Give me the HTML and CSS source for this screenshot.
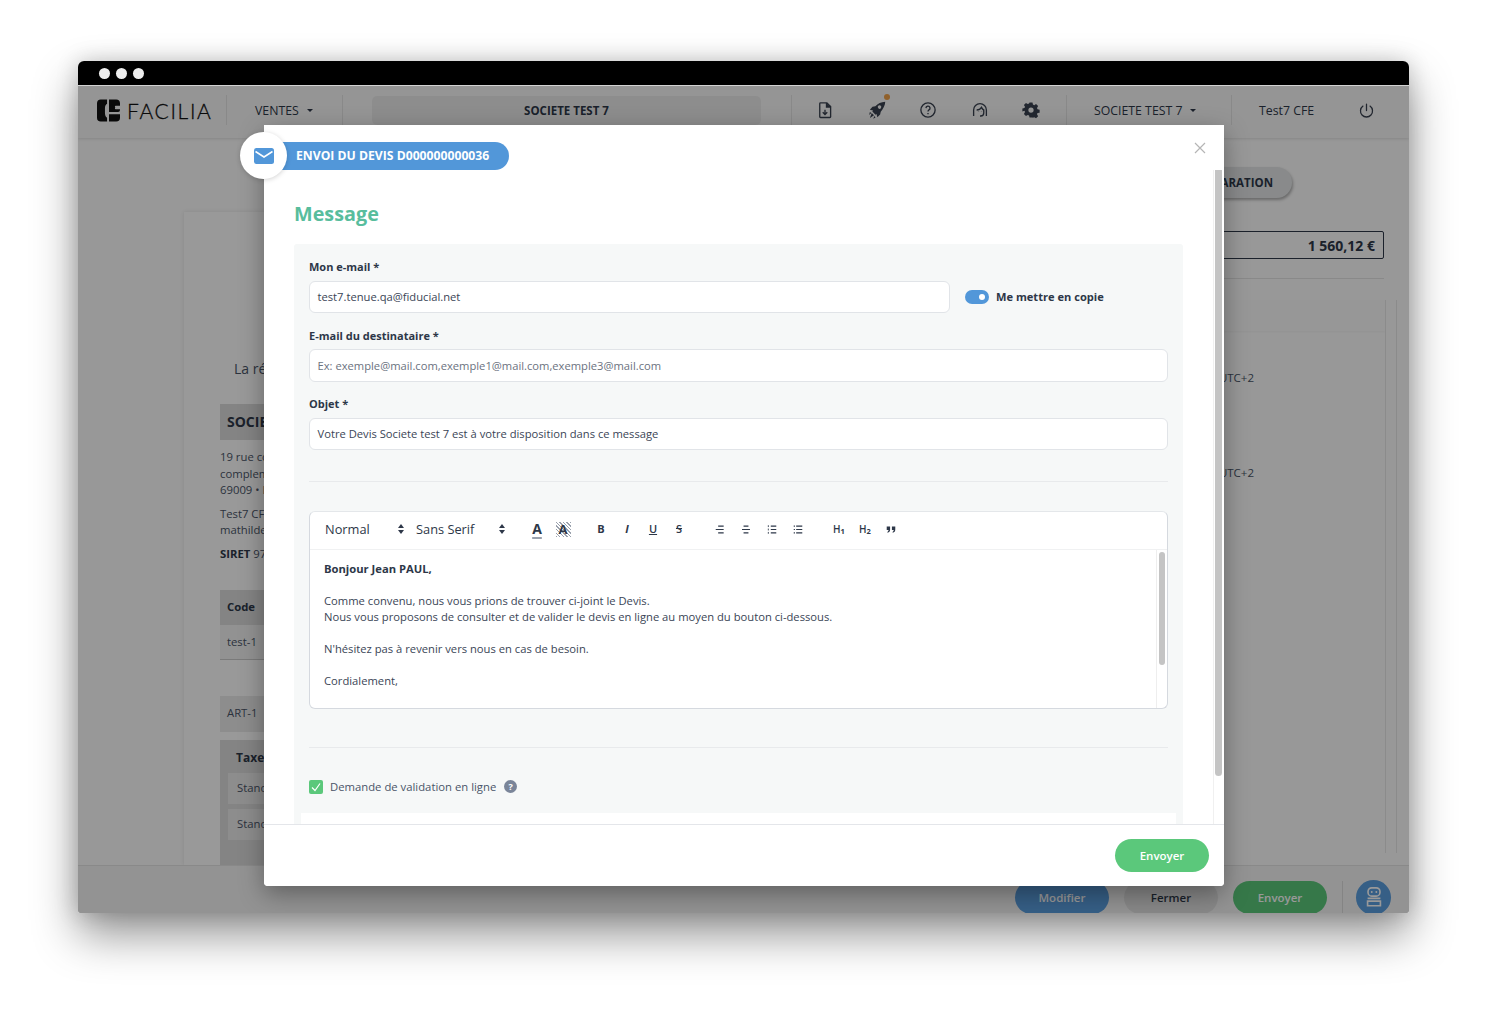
FILE: index.html
```html
<!DOCTYPE html>
<html lang="fr">
<head>
<meta charset="utf-8">
<title>Facilia</title>
<link rel="stylesheet" href="styles.css">
</head>
<body>
<div class="window">
  <div class="titlebar"><i class="dot"></i><i class="dot"></i><i class="dot"></i></div>
  <div class="app">
    <header class="topbar">
      <div class="brand">
        <svg class="brand-mark" viewBox="0 0 24 23"><path fill="#111" d="M4 0h6.500v4.500c-1.500 1-2.200 2.500-2.200 4.500v5c0 2.500.8 4 2.200 5V23H4a4 4 0 0 1-4-4V4a4 4 0 0 1 4-4z"/><path fill="#111" d="M12.500 0H20a4 4 0 0 1 4 4v2.500h-4.500a1.800 1.800 0 0 0 0 3.600H24v.9a2 2 0 0 1-2 2h-9.500zM12.500 15.500H24V19a4 4 0 0 1-4 4h-7.500z"/><circle cx="16" cy="8.300" r="2.900" fill="#111"/></svg>
        <span class="brand-name">FACILIA</span>
      </div>
      <div class="nav-menu">VENTES <i class="caret"></i></div>
      <div class="company-field">SOCIETE TEST 7</div>
      <div class="tools">
        <svg class="tool" viewBox="0 0 24 24" fill="none" stroke="#3a4250" stroke-width="1.800"><path d="M6 2.500h8.500l5 5V21a1 1 0 0 1-1 1H6a1 1 0 0 1-1-1V3.500a1 1 0 0 1 1-1z"/><path d="M14 2.500V8h5.500" fill="#3a4250"/><path d="M12 11.500v6M9 15l3 3 3-3"/></svg>
        <span class="tool-wrap">
          <svg class="tool" viewBox="0 0 24 24" fill="#3a4250"><path d="M23 1c-5.500.2-10 2.300-13.200 6L6 7.800 2.500 11.500l4.200 1.200-.9 1.300 4.200 4.200 1.300-.9 1.200 4.200 3.700-3.500.8-3.800C19.700 11 22.800 6.500 23 1zM17.300 9.300a2.300 2.300 0 1 1-3.200-3.200 2.300 2.300 0 0 1 3.200 3.200zM5 16l3 3-5.500 3.500zM2.500 14.500l2 1.500-3 2.500zM8.500 20l1.500 2-3 1.500z"/></svg>
          <i class="notif"></i>
        </span>
        <svg class="tool" viewBox="0 0 24 24" fill="none" stroke="#3a4250" stroke-width="1.800"><circle cx="12" cy="12" r="9.500"/><path d="M9.300 9.500a2.700 2.700 0 1 1 4 2.400c-.9.500-1.300 1-1.300 2.100M12 16v1.800"/></svg>
        <svg class="tool" viewBox="0 0 24 24" fill="none" stroke="#3a4250" stroke-width="1.800"><path d="M3.500 20v-8a8.500 8.500 0 0 1 17 0v8"/><path d="M7.500 12c2.500 0 5-1 6.500-3.500 1 2 2.500 3.300 3 3.500v4a4 4 0 0 1-4 4h-1"/><path d="M10 13.500v.5M14 13.500v.5"/></svg>
        <svg class="tool" viewBox="0 0 24 24" fill="#3a4250"><path fill-rule="evenodd" d="M10 2h4l.6 2.800 1.700.7 2.400-1.500 2.800 2.800-1.500 2.400.7 1.700 2.800.6v4l-2.800.6-.7 1.700 1.500 2.400-2.800 2.800-2.400-1.500-1.700.7L14 22h-4l-.6-2.800-1.700-.7-2.400 1.500-2.800-2.800 1.500-2.400-.7-1.700L.5 14v-4l2.800-.6.7-1.700L2.500 5.300l2.800-2.800 2.400 1.500 1.700-.7zM12 8.500a3.500 3.500 0 1 0 0 7 3.500 3.500 0 0 0 0-7z"/></svg>
      </div>
      <div class="nav-company">SOCIETE TEST 7 <i class="caret"></i></div>
      <div class="nav-user">
        <span>Test7 CFE</span>
        <svg class="power" viewBox="0 0 24 24" fill="none" stroke="#3a4250" stroke-width="1.800" stroke-linecap="round"><path d="M12 3v9M7 5.800a8.500 8.500 0 1 0 10 0"/></svg>
      </div>
    </header>

    <main class="workspace">
      <section class="sheet">
        <p class="sheet-ref">La référence</p>
        <div class="band band-title">SOCIETE TEST 7</div>
        <p class="addr">19 rue complement<br>complement<br>69009 • Lyon</p>
        <p class="addr">Test7 CFE<br>mathilde</p>
        <p class="addr"><b>SIRET</b> 97000000</p>
        <div class="band band-head">Code</div>
        <div class="table-row">test-1</div>
        <div class="band band-art">ART-1</div>
        <div class="tax-box">
          <div class="tax-title">Taxe</div>
          <div class="tax-card">Standard</div>
          <div class="tax-card">Standard</div>
        </div>
      </section>
      <aside class="side">
        <div class="status-line"><span class="status">EN PRÉPARATION</span></div>
        <div class="total">1 560,12 €</div>
        <div class="side-rule"></div>
        <div class="side-scroll">
          <div class="side-panel"></div>
          <div class="log first">Envoyé le 01/01 à 10:00 UTC+2</div>
          <div class="log second">Envoyé le 01/01 à 10:00 UTC+2</div>
        </div>
      </aside>
    </main>

    <footer class="bottombar">
      <button class="pill pill-blue">Modifier</button>
      <button class="pill pill-grey">Fermer</button>
      <button class="pill pill-green">Envoyer</button>
      <span class="bottom-sep"></span>
      <span class="bot">
        <svg viewBox="0 0 24 24" fill="none" stroke="#fff" stroke-width="1.800"><rect x="5.500" y="2" width="13" height="9" rx="4"/><path d="M9.500 6.500h.1M14.500 6.500h.1" stroke-linecap="round" stroke-width="2"/><path d="M5 13.500h14M5 16.500h14v5H5z"/></svg>
      </span>
    </footer>

    <div class="overlay"></div>

    <div class="modal">
      <div class="modal-title">
        <span class="mail-disc">
          <svg viewBox="0 0 20 16"><rect width="20" height="16" rx="2.500" fill="#5297d9"/><path d="M1.500 3.500 10 9l8.500-5.500" fill="none" stroke="#fff" stroke-width="1.500"/></svg>
        </span>
        <span class="title-pill">ENVOI DU DEVIS D000000000036</span>
      </div>
      <svg class="close" viewBox="0 0 12 12" fill="none" stroke="#b5b5b5" stroke-width="1.200"><path d="M1 1l10 10M11 1 1 11"/></svg>
      <div class="modal-body">
        <h2 class="heading">Message</h2>
        <div class="form-panel">
          <label class="label">Mon e-mail *</label>
          <div class="row">
            <div class="input input-mail">test7.tenue.qa@fiducial.net</div>
            <span class="switch"><i></i></span>
            <span class="switch-label">Me mettre en copie</span>
          </div>
          <label class="label">E-mail du destinataire *</label>
          <div class="input placeholder">Ex: exemple@mail.com,exemple1@mail.com,exemple3@mail.com</div>
          <label class="label">Objet *</label>
          <div class="input">Votre Devis Societe test 7 est à votre disposition dans ce message</div>
          <hr class="rule rule-top">
          <div class="editor">
            <div class="toolbar">
              <span class="picker picker-size">Normal<svg viewBox="0 0 8 12" fill="#2d3748"><path d="M4 1l3 4H1zM4 11 1 7h6z"/></svg></span>
              <span class="picker picker-font">Sans Serif<svg viewBox="0 0 8 12" fill="#2d3748"><path d="M4 1l3 4H1zM4 11 1 7h6z"/></svg></span>
              <span class="tb-group tb-colors">
                <span class="tb tb-color">A</span>
                <span class="tb tb-bg">A</span>
              </span>
              <span class="tb-group">
                <span class="tb tb-b">B</span>
                <span class="tb tb-i">I</span>
                <span class="tb tb-u">U</span>
                <span class="tb tb-s">S</span>
              </span>
              <span class="tb-group">
                <svg class="tb-ic" viewBox="0 0 18 18" stroke="#2d3748" stroke-width="1.800"><path d="M6 3.500h9M2 9h13M6 14.500h9"/></svg>
                <svg class="tb-ic" viewBox="0 0 18 18" stroke="#2d3748" stroke-width="1.800"><path d="M5 3.500h8M2.500 9h13M5 14.500h8"/></svg>
                <svg class="tb-ic" viewBox="0 0 18 18" stroke="#2d3748" stroke-width="1.800"><path d="M7 3.500h9M7 9h9M7 14.500h9"/><path d="M3 2v3M3 7.500v3M3 13v3" stroke-width="1.400"/></svg>
                <svg class="tb-ic" viewBox="0 0 18 18" stroke="#2d3748" stroke-width="1.800"><path d="M6 3.500h10M6 9h10M6 14.500h10M2 3.500h2M2 9h2M2 14.500h2"/></svg>
              </span>
              <span class="tb-group">
                <span class="tb tb-h">H<sub>1</sub></span>
                <span class="tb tb-h">H<sub>2</sub></span>
                <svg class="tb-ic" viewBox="0 0 18 18" fill="#2d3748"><path d="M2 4h5.500v5C7.500 12 6 13.500 3.500 14.500L3 13c1.300-.6 2-1.500 2-3H2zM10.500 4H16v5c0 3-1.500 4.500-4 5.500l-.5-1.500c1.300-.6 2-1.500 2-3h-3z"/></svg>
              </span>
            </div>
            <div class="editor-content">
              <div class="editor-text">
                <p><b>Bonjour Jean PAUL,</b></p>
                <p>&nbsp;</p>
                <p>Comme convenu, nous vous prions de trouver ci-joint le Devis.</p>
                <p>Nous vous proposons de consulter et de valider le devis en ligne au moyen du bouton ci-dessous.</p>
                <p>&nbsp;</p>
                <p>N'hésitez pas à revenir vers nous en cas de besoin.</p>
                <p>&nbsp;</p>
                <p>Cordialement,</p>
              </div>
              <div class="editor-track"><i></i></div>
            </div>
          </div>
          <hr class="rule rule-bottom">
          <div class="check-row">
            <span class="check"><svg viewBox="0 0 14 14" fill="none" stroke="#fff" stroke-width="1.200"><path d="M3 7.500 6 10.500l5-7"/></svg></span>
            <span class="check-label">Demande de validation en ligne</span>
            <span class="help">?</span>
          </div>
          <div class="next-block"></div>
        </div>
        <div class="modal-track"><i></i></div>
      </div>
      <div class="modal-foot">
        <button class="send">Envoyer</button>
      </div>
    </div>
  </div>
</div>
</body>
</html>
```
FILE: styles.css
```css
* { box-sizing: border-box; }
html, body { margin: 0; height: 100%; }
body {
  background: #fff;
  padding: 61px 79px 0 78px;
  height: 1010px;
  overflow: hidden;
  font-family: "Open Sans", "Noto Sans", sans-serif;
  color: #2d3748;
}
p { margin: 0; }
button { font-family: inherit; border: 0; }

.window {
  height: 852px;
  display: flex;
  flex-direction: column;
  border-radius: 6px 6px 2px 2px;
  box-shadow: 0 22px 45px rgba(0,0,0,.42), 0 0 22px rgba(0,0,0,.18);
  overflow: hidden;
}
.titlebar {
  height: 25px;
  flex: none;
  background: #000;
  border-bottom: 1px solid #d8d8d8;
  display: flex;
  align-items: center;
  gap: 6px;
  padding: 0 0 0 21px;
}
.dot { width: 11px; height: 11px; border-radius: 50%; background: #eee; }
.app { position: relative; flex: 1; display: flex; flex-direction: column; min-height: 0; background: #fdfdfd; }

.topbar {
  height: 52px;
  flex: none;
  background: #f9f9f9;
  box-shadow: 0 1px 3px rgba(0,0,0,.12);
  display: flex;
  align-items: center;
  padding-bottom: 4px;
  position: relative;
  font-size: 12.300px;
  color: #2d3748;
}
.brand { width: 149px; height: 30px; padding-left: 19px; display: flex; align-items: center; gap: 7px; border-right: 1px solid #e5e5e5; flex: none; }
.brand-mark { width: 23px; height: 23px; flex: none; }
.brand-name { font-family: Lato, sans-serif; font-size: 21px; font-weight: 300; letter-spacing: 1.700px; -webkit-text-stroke: .3px #111; color: #111; line-height: 1; }
.nav-menu { width: 116px; height: 30px; flex: none; display: flex; align-items: center; padding-left: 28px; gap: 7px; border-right: 1px solid #e5e5e5; }
.caret { width: 0; height: 0; border: 3px solid transparent; border-top-color: #2d3748; border-bottom: 0; margin-left: 1px; }
.company-field { width: 389px; height: 29px; flex: none; margin-left: 29px; background: #ececec; border-radius: 5px; display: flex; align-items: center; justify-content: center; font-weight: 700; font-size: 11.500px; }
.tools { width: 276px; margin-left: 30px; height: 30px; flex: none; padding-left: 24px; gap: 33.500px; display: flex; align-items: center; border-left: 1px solid #e5e5e5; border-right: 1px solid #e5e5e5; }
.tool { width: 18px; height: 18px; display: block; }
.tool-wrap { position: relative; display: block; }
.notif { position: absolute; width: 6px; height: 6px; border-radius: 50%; background: #f0a24a; right: -4px; top: -7px; }
.nav-company { width: 165px; height: 30px; flex: none; display: flex; align-items: center; gap: 7px; padding-left: 27px; border-right: 1px solid #e5e5e5; }
.nav-user { flex: 1; display: flex; align-items: center; justify-content: space-between; padding: 0 34px 0 27px; }
.power { width: 17px; height: 17px; }

.workspace { flex: 1; min-height: 0; display: flex; overflow: hidden; }
.sheet { width: 900px; margin: 74px 0 0 106px; flex: none; background: #fff; box-shadow: 0 0 4px rgba(0,0,0,.1); padding: 147px 0 0 36px; font-size: 11.300px; color: #4a5568; }
.sheet-ref { font-size: 14px; padding-left: 14px; line-height: 20px; margin-bottom: 25px; }
.band { background: #dcdcdc; padding-left: 7px; display: flex; align-items: center; }
.band-title { height: 36px; padding-bottom: 2px; font-size: 14px; font-weight: 700; color: #2d3748; margin-bottom: 9px; }
.addr { line-height: 16.600px; margin-bottom: 7px; }
.addr b { color: #2d3748; }
.band-head { height: 35px; font-weight: 700; color: #2d3748; margin-top: 27px; padding-bottom: 2px; }
.table-row { height: 35px; display: flex; align-items: center; padding-left: 7px; background: #f3f3f3; border-bottom: 1px solid #ccc; }
.band-art { height: 36px; margin-top: 36px; background: #ececec; padding-bottom: 2px; }
.tax-box { margin-top: 8px; height: 130px; background: #dcdcdc; padding: 9px 8px 0; }
.tax-title { font-weight: 700; font-size: 12px; padding-left: 8px; margin-bottom: 7px; color: #2d3748; }
.tax-card { height: 31px; background: #ececec; padding-left: 9px; display: flex; align-items: center; margin-bottom: 5px; padding-bottom: 2px; }

.side { width: 284px; margin-left: 16px; flex: none; display: flex; flex-direction: column; }
.status-line { display: flex; justify-content: flex-end; padding: 29px 92px 0 0; }
.status { height: 31px; padding: 0 19px; border-radius: 16px; background: #e4e7e8; box-shadow: 1px 2px 3px rgba(0,0,0,.3); font-size: 11.500px; font-weight: 700; display: flex; align-items: center; color: #2d3748; }
.total { margin-top: 33px; height: 28px; border: 1px solid #2d3748; border-radius: 2px; display: flex; align-items: center; justify-content: flex-end; padding-right: 8px; font-size: 14px; font-weight: 700; color: #2d3748; }
.side-rule { height: 1px; background: #e5e5e5; margin-top: 19px; }
.side-scroll { margin-top: 21px; height: 553px; margin-right: -13px; padding-right: 13px; border-right: 1px solid #e8e8e8; position: relative; font-size: 11.500px; color: #4a5568; }
.side-scroll::after { content: ""; position: absolute; right: 10px; top: 0; bottom: 0; width: 1px; background: #e8e8e8; }
.side-panel { height: 31px; margin-right: -2px; background: #fcfcfc; box-shadow: 0 1px 2px rgba(0,0,0,.04); }
.log { white-space: nowrap; display: flex; justify-content: flex-end; width: 154px; line-height: 16px; }
.log.first { margin-top: 39px; }
.log.second { margin-top: 79px; }

.bottombar { height: 48px; flex: none; background: #f5f5f5; border-top: 1px solid #e4e4e4; display: flex; align-items: center; padding: 15px 18px 0 0; justify-content: flex-end; }
.pill { width: 94px; height: 33px; border-radius: 17px; font-size: 11.500px; font-weight: 600; margin-right: 15px; color: #fff; }
.pill-blue { background: #5a9edf; }
.pill-grey { background: #e3e3e3; color: #2d3748; }
.pill-green { background: #5bc87b; margin-right: 15px; }
.bottom-sep { width: 1px; height: 32px; background: #ddd; margin-right: 13px; }
.bot { width: 35px; height: 35px; background: #5a9edf; border-radius: 50%; display: flex; align-items: center; justify-content: center; }
.bot svg { width: 22px; height: 22px; }

.overlay { position: absolute; inset: 0; background: rgba(0,0,0,.4); }

.modal {
  position: absolute;
  left: 186px;
  top: 39px;
  width: 960px;
  height: 761px;
  background: #fff;
  border-radius: 0 0 4px 4px;
  box-shadow: 0 8px 25px rgba(0,0,0,.35);
  display: flex;
  flex-direction: column;
}
.modal-title { position: absolute; left: -24px; top: 7px; display: flex; align-items: center; z-index: 2; }
.mail-disc { width: 47px; height: 47px; border-radius: 50%; background: #fff; box-shadow: 0 1px 5px rgba(0,0,0,.18); display: flex; align-items: center; justify-content: center; position: relative; z-index: 1; flex: none; }
.mail-disc svg { width: 20px; height: 16px; }
.title-pill { height: 28px; width: 240px; margin-left: -18px; padding-left: 27px; background: #5297d9; color: #fff; border-radius: 0 14px 14px 0; font-size: 12.200px; font-weight: 700; display: flex; align-items: center; white-space: nowrap; }
.close { position: absolute; right: 18px; top: 17px; width: 12px; height: 12px; }
.modal-body { flex: 1; min-height: 0; padding: 74px 0 0 30px; overflow: hidden; position: relative; }
.heading { margin: 0 0 16px; font-size: 19.800px; line-height: 29px; font-weight: 700; color: #58bd9d; }
.form-panel { width: 889px; background: #f6f8f8; padding: 15px 15px 0; height: 580px; border-radius: 3px 3px 0 0; position: relative; }
.label { display: block; font-size: 11px; font-weight: 700; line-height: 16px; color: #2d3748; margin-bottom: 5.500px; }
.input { height: 32.500px; background: #fff; border: 1px solid #e1e4e8; border-radius: 6px; display: flex; align-items: center; padding-left: 7.500px; font-size: 11.200px; color: #3a4556; margin-bottom: 14.500px; }
.placeholder { color: #6b7280; }
.row { display: flex; align-items: flex-start; }
.input-mail { width: 641px; flex: none; }
.switch { width: 24px; height: 14px; border-radius: 7px; background: #5297d9; margin: 9px 0 0 15px; flex: none; position: relative; }
.switch i { position: absolute; right: 4px; top: 4px; width: 6px; height: 6px; background: #fff; border-radius: 50%; }
.switch-label { font-size: 11.100px; font-weight: 700; margin: 8px 0 0 7px; line-height: 16px; }
.rule { border: 0; height: 1px; background: #e8eaec; margin: 0; }
.rule-top { margin: 30.500px 0 29px; }
.editor { height: 198px; background: #fff; border: 1px solid #d5d9df; border-top-color: #e4e7ea; border-radius: 6px; display: flex; flex-direction: column; overflow: hidden; }
.toolbar { height: 38px; flex: none; border-bottom: 1px solid #f0f1f2; display: flex; align-items: center; padding: 0 0 2px 15px; }
.picker { display: flex; align-items: center; justify-content: space-between; font-size: 12.800px; color: #2d3748; }
.picker svg { width: 8px; height: 12px; }
.picker-size { width: 80px; margin-right: 11px; }
.picker-font { width: 90px; margin-right: 18px; }
.tb-group { display: flex; align-items: center; margin-right: 15px; }
.tb-colors { margin-right: 12px; }
.tb { width: 26px; text-align: center; font-size: 11px; line-height: 16px; color: #2d3748; flex: none; }
.tb-ic { width: 26px; height: 11px; flex: none; }
.tb-color { font-size: 14px; font-weight: 700; text-decoration: underline; text-decoration-color: #9aa1ad; text-decoration-thickness: 2px; text-underline-offset: 3px; }
.tb-bg { font-size: 13px; font-weight: 700; background: repeating-linear-gradient(45deg, #9aa1ad 0 1px, transparent 1px 2.500px) center / 15px 15px no-repeat; }
.tb-b { font-weight: 700; }
.tb-i { font-style: italic; font-weight: 700; }
.tb-u { text-decoration: underline; font-weight: 600; }
.tb-s { text-decoration: line-through; font-weight: 600; }
.tb-h { font-weight: 600; font-size: 10px; }
.tb-h sub { font-size: 7.500px; line-height: 0; vertical-align: -1px; font-weight: 700; }
.editor-content { flex: 1; min-height: 0; display: flex; }
.editor-text { flex: 1; padding: 11px 14px 0; font-size: 11.230px; line-height: 16px; color: #3a4556; }
.editor-text b { color: #2d3748; }
.editor-track { width: 11px; flex: none; border-left: 1px solid #eee; padding: 2px 2px 0; }
.editor-track i { display: block; width: 6px; height: 113px; border-radius: 3px; background: #c4c4c4; }
.rule-bottom { margin: 38px 0 32px; }
.check-row { display: flex; align-items: center; height: 14px; }
.check { width: 14px; height: 14px; border-radius: 2px; background: #5bc87b; flex: none; }
.check svg { display: block; width: 14px; height: 14px; }
.check-label { font-size: 11.300px; color: #4a5568; margin-left: 7px; }
.help { width: 13px; height: 13px; margin-left: 8px; border-radius: 50%; background: #7a8599; color: #fff; font-size: 9px; font-weight: 700; display: flex; align-items: center; justify-content: center; }
.next-block { position: absolute; left: 7px; right: 7px; bottom: 0; height: 11px; background: #fff; }
.modal-track { position: absolute; right: 1px; top: 45px; bottom: 0; width: 10px; border-left: 1px solid #f0f0f0; padding-left: 1px; }
.modal-track i { display: block; width: 7px; height: 606px; background: #c4c4c4; border-radius: 0 0 4px 4px; }
.modal-foot { height: 62px; flex: none; border-top: 1px solid #e4e6ea; display: flex; align-items: center; justify-content: flex-end; padding-right: 15px; background: #fff; border-radius: 0 0 4px 4px; }
.send { width: 94px; height: 33px; border-radius: 17px; background: #5bc87b; color: #fff; font-size: 11.500px; font-weight: 600; }
```
